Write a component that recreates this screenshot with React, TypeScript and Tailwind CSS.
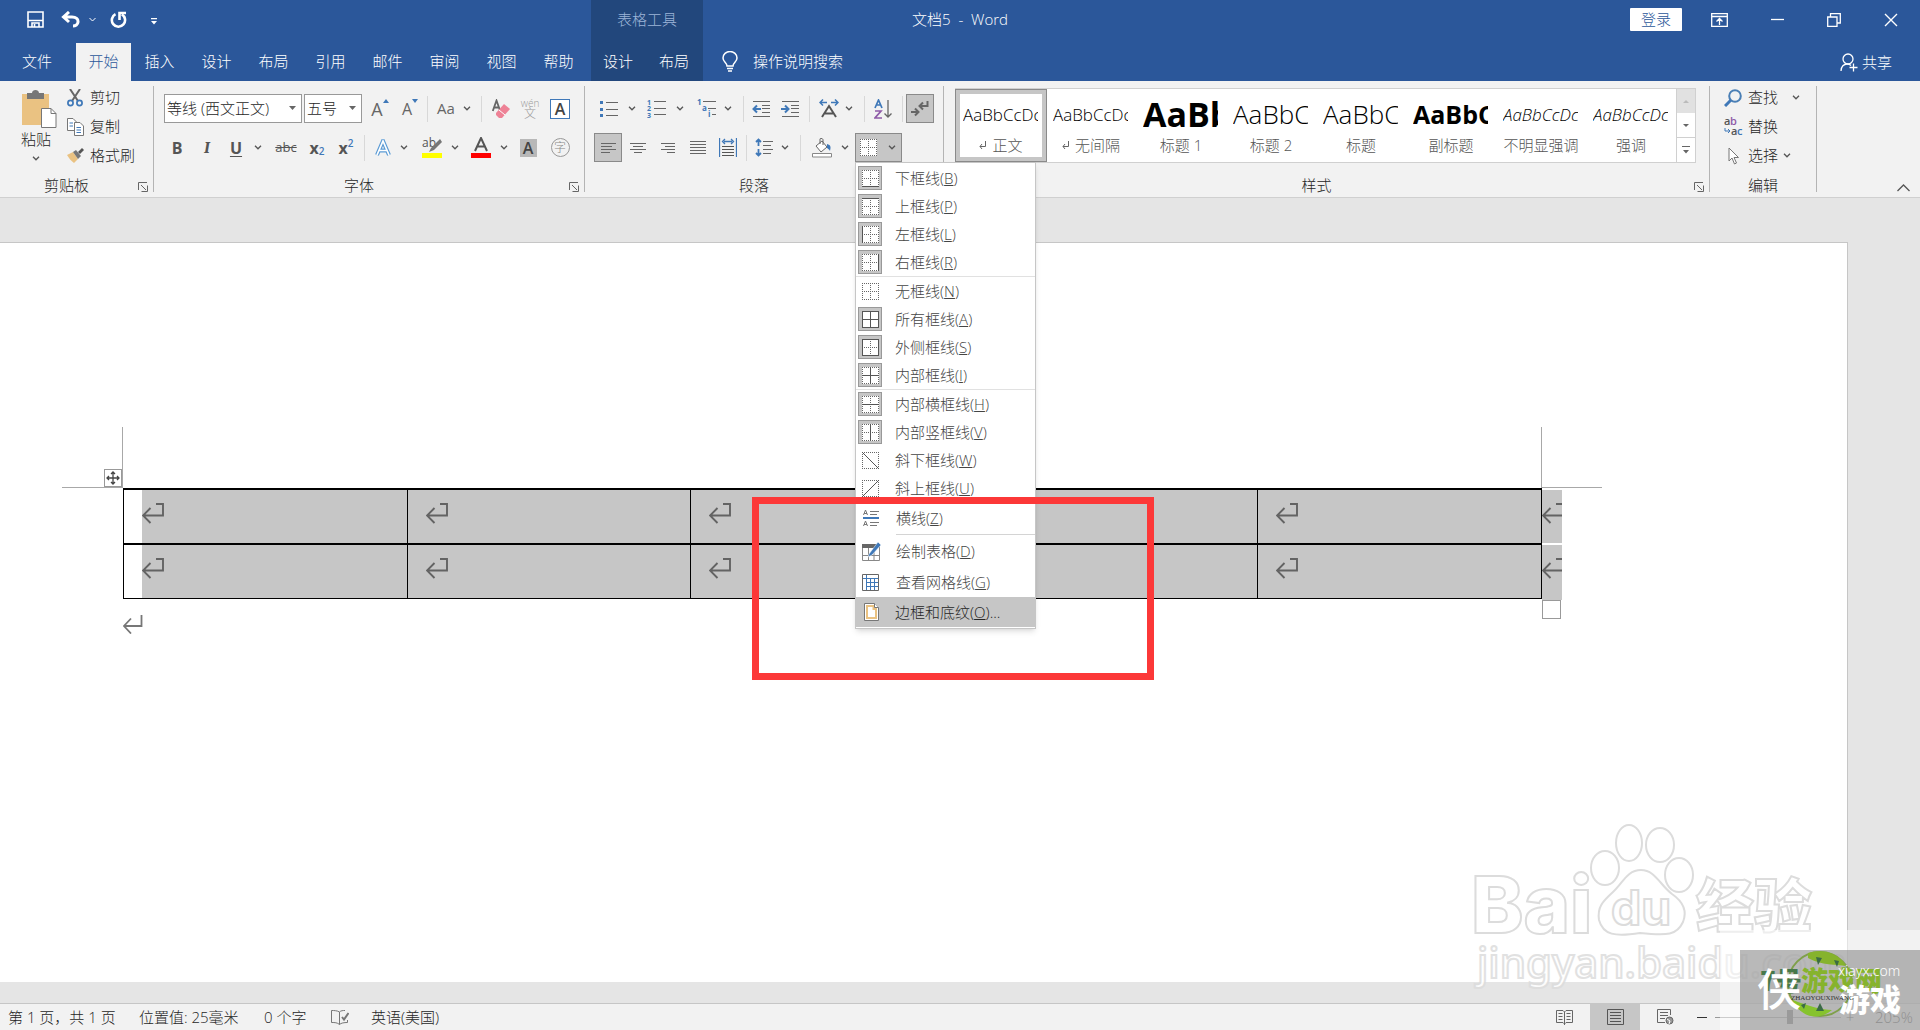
import type { ReactNode } from 'react';
import clsx from 'clsx';

const tabs = ['插入', '设计', '布局', '引用', '邮件', '审阅', '视图', '帮助'];

const styleItems = [
  { name: '正文', mark: true, preview: 'AaBbCcDc', cls: 'text-[17px]', active: true },
  { name: '无间隔', mark: true, preview: 'AaBbCcDc', cls: 'text-[17px]' },
  { name: '标题 1', preview: 'AaBb', cls: 'text-[34px] font-bold' },
  { name: '标题 2', preview: 'AaBbC', cls: 'text-[26px]' },
  { name: '标题', preview: 'AaBbC', cls: 'text-[26px]' },
  { name: '副标题', preview: 'AaBbC', cls: 'text-[25px] font-bold' },
  { name: '不明显强调', preview: 'AaBbCcDc', cls: 'text-[17px] italic text-[#555]' },
  { name: '强调', preview: 'AaBbCcDc', cls: 'text-[17px] italic' },
];

type Border = { label: string; hot: string; lines: string; on?: boolean };

// t/b/l/r = outer edges, h/v = inner lines, d/u = diagonals
const borderGroups: Border[][] = [
  [
    { label: '下框线', hot: 'B', lines: 'b', on: true },
    { label: '上框线', hot: 'P', lines: 't', on: true },
    { label: '左框线', hot: 'L', lines: 'l', on: true },
    { label: '右框线', hot: 'R', lines: 'r', on: true },
  ],
  [
    { label: '无框线', hot: 'N', lines: '' },
    { label: '所有框线', hot: 'A', lines: 'tblrhv', on: true },
    { label: '外侧框线', hot: 'S', lines: 'tblr', on: true },
    { label: '内部框线', hot: 'I', lines: 'hv', on: true },
  ],
  [
    { label: '内部横框线', hot: 'H', lines: 'h', on: true },
    { label: '内部竖框线', hot: 'V', lines: 'v', on: true },
    { label: '斜下框线', hot: 'W', lines: 'd' },
    { label: '斜上框线', hot: 'U', lines: 'u' },
  ],
];

const linePaths: Record<string, string> = {
  t: 'M0 .5H17', b: 'M0 16.5H17', l: 'M.5 0V17', r: 'M16.5 0V17',
  h: 'M0 8.5H17', v: 'M8.5 0V17', d: 'M0 0L17 17', u: 'M0 17L17 0',
};

function BorderIcon({ lines }: { lines: string }) {
  const diagonal = lines === 'd' || lines === 'u';
  return (
    <svg width="17" height="17" viewBox="0 0 17 17" fill="none">
      {!diagonal && <rect width="17" height="17" fill="#fff" />}
      <path d="M0 .5H17M0 16.5H17M.5 0V17M16.5 0V17" stroke="#666" strokeDasharray="1 1" />
      {!diagonal && <path d="M2 8.5H15M8.5 2V15" stroke="#666" strokeDasharray="1 1" />}
      {lines.split('').map(l => <path key={l} d={linePaths[l]} stroke="#555" />)}
    </svg>
  );
}

function Chevron({ className }: { className?: string }) {
  return (
    <svg className={clsx('shrink-0', className)} width="8" height="5" viewBox="0 0 8 5" fill="none">
      <path d="M1 .8L4 3.8L7 .8" stroke="#555" strokeWidth="1.3" />
    </svg>
  );
}

function Btn({ label, className, children }: { label: string; className?: string; children: ReactNode }) {
  return (
    <button type="button" aria-label={label} className={clsx('flex h-[29px] shrink-0 items-center justify-center', className)}>
      {children}
    </button>
  );
}

function Sep({ className = 'w-1.5' }: { className?: string }) {
  return <div className={clsx('flex shrink-0 justify-center', className)}><div className="h-[26px] w-px bg-[#d8d8d8]" /></div>;
}

function Group({ label, launcher = true, className, children }: { label: string; launcher?: boolean; className?: string; children: ReactNode }) {
  return (
    <>
      <section aria-label={label} className={clsx('flex shrink-0 flex-col', className)}>
        <div className="h-[94px]">{children}</div>
        <div className="flex h-5 items-center">
          <span className="flex-1 text-center text-[15px] leading-5">{label}</span>
          {launcher && (
            <button type="button" aria-label={label + '设置'} className="flex w-5 justify-center pt-1">
              <svg width="10" height="10" viewBox="0 0 10 10" fill="none" stroke="#666">
                <path d="M.5 8V.5H9M3 3L8 8M9.5 3.5V9.5H3.5" />
              </svg>
            </button>
          )}
        </div>
      </section>
      <div className="mt-[5px] h-[106px] w-px shrink-0 bg-[#b4b4b4]" />
    </>
  );
}

const Lines = ({ d }: { d: string }) => (
  <svg width="18" height="18" viewBox="0 0 18 18" stroke="#666" fill="none"><path d={d} /></svg>
);

function ReturnMark() {
  return (
    <svg className="shrink-0" width="22" height="21" viewBox="0 0 22 21" fill="none" stroke="#636363" strokeWidth="1.9">
      <path d="M14 1H21V12.5H1M8.5 5L1 12.5L8.5 20" />
    </svg>
  );
}

const SmallMark = () => (
  <svg width="8" height="8" viewBox="0 0 8 8" fill="none" stroke="#666"><path d="M6.5 0V5.5H1M3 3L1 5.5L3 8" /></svg>
);

function TitleBar() {
  return (
    <div className="grid h-[43px] grid-cols-[1fr_auto_1fr] text-[15px] text-white">
      <div className="flex">
        <div className="flex w-[591px] shrink-0 items-center pb-1 pl-[27px]">
          <button type="button" aria-label="保存">
            <svg width="17" height="17" viewBox="0 0 17 17" fill="none" stroke="#fff" strokeWidth="1.6"><path d="M1 1H16V16H1ZM1.5 9.5H15.5M5 16V12H12V16M7.5 13V16" /></svg>
          </button>
          <button type="button" aria-label="撤消" className="ml-[17px] flex items-center gap-[9px]">
            <svg width="19" height="17" viewBox="0 0 19 17" fill="none" stroke="#fff" strokeWidth="3"><path d="M8 1L2.5 6L8 11M2.5 6H11C15 6 17.3 8 17 11C16.8 13.5 14.5 15 12 15" /></svg>
            <svg width="7" height="5" viewBox="0 0 7 5" fill="none" stroke="#fff"><path d="M.5 1L3.5 4L6.5 1" /></svg>
          </button>
          <button type="button" aria-label="重复" className="ml-[14px]">
            <svg width="17" height="18" viewBox="0 0 17 18" fill="none" stroke="#fff" strokeWidth="2.6"><path d="M5.5 3.2A6.6 6.6 0 1 0 11.8 3.4" /><path d="M9.5 9V2H16" /></svg>
          </button>
          <button type="button" aria-label="自定义快速访问工具栏" className="ml-[24px] pt-1">
            <svg width="6" height="7" viewBox="0 0 6 7" fill="#fff"><path d="M0 0H6V1.2H0ZM0 3H6L3 6.5Z" /></svg>
          </button>
        </div>
        <div className="flex w-[112px] shrink-0 items-center justify-center bg-[#22477c] pb-1 text-[#9db5d8]">表格工具</div>
      </div>
      <h1 className="flex items-center pb-1 whitespace-pre">文档5  -  Word</h1>
      <div className="flex items-center justify-end pr-[22px] pb-1">
        <button type="button" className="mr-[29px] h-[23px] w-[52px] rounded-[1px] bg-white leading-[23px] text-[#2b579a]">登录</button>
        <button type="button" aria-label="功能区显示选项" className="mr-[43px]">
          <svg width="17" height="14" viewBox="0 0 17 14" fill="none" stroke="#fff" strokeWidth="1.3"><path d="M.7 .7H16.3V13.3H.7ZM.7 3.5H16.3M8.5 12V6M5.5 8.5L8.5 5.5L11.5 8.5" /></svg>
        </button>
        <button type="button" aria-label="最小化" className="mr-[43px]">
          <svg width="13" height="13" viewBox="0 0 13 13" stroke="#fff"><path d="M0 6.5H13" strokeWidth="1.3" /></svg>
        </button>
        <button type="button" aria-label="向下还原" className="mr-[43px]">
          <svg width="14" height="14" viewBox="0 0 14 14" fill="none" stroke="#fff" strokeWidth="1.3"><path d="M.7 4H10V13.3H.7ZM3.5 4V.7H13.3V10H10" /></svg>
        </button>
        <button type="button" aria-label="关闭">
          <svg width="14" height="14" viewBox="0 0 14 14" stroke="#fff" strokeWidth="1.4"><path d="M1 1L13 13M13 1L1 13" /></svg>
        </button>
      </div>
    </div>
  );
}

function TabRow() {
  return (
    <nav className="flex h-[38px] text-[15px] text-white">
      <div className="flex w-[591px] shrink-0">
        <button type="button" className="w-[76px] pr-0.5 pb-0.5">文件</button>
        <button type="button" className="w-[55px] bg-[#f2f2f2] pb-0.5 text-[#2b579a]">开始</button>
        {tabs.map(t => <button type="button" key={t} className="w-[57px] pb-0.5">{t}</button>)}
      </div>
      <div className="flex w-[112px] shrink-0 bg-[#22477c] pb-0.5">
        <button type="button" className="w-[54px]">设计</button>
        <button type="button" className="w-[58px]">布局</button>
      </div>
      <label className="flex items-center pb-0.5 pl-[19px]">
        <svg width="16" height="21" viewBox="0 0 16 21" fill="none" stroke="#fff" strokeWidth="1.5">
          <path d="M5 15C5 12 1 11 1 7A7 6.5 0 0 1 15 7C15 11 11 12 11 15ZM5 17.5H11M6 20H10" />
        </svg>
        <input type="text" aria-label="操作说明搜索" placeholder="操作说明搜索" className="ml-[15px] w-[180px] bg-transparent outline-none placeholder:text-white" />
      </label>
      <button type="button" className="mr-[28px] ml-auto flex items-center gap-1">
        <svg width="18" height="19" viewBox="0 0 18 19" fill="none" stroke="#fff" strokeWidth="1.3">
          <circle cx="8" cy="6" r="5" /><path d="M1 18C1 13.5 4 11 7 11C9 11 10 11.5 11 12.5M13.5 10.5V18.5M9.5 14.5H17.5" />
        </svg>
        共享
      </button>
    </nav>
  );
}

function Clipboard() {
  return (
    <Group label="剪贴板" className="w-[153px]">
      <div className="flex pt-2">
        <button type="button" className="ml-[15px] flex w-[42px] flex-col items-center">
          <svg width="42" height="39" viewBox="-6 0 42 39">
            <path d="M1 5H28V36H1Z" fill="#eac282" />
            <path d="M6 4H11C11 0 18 0 18 4H23V10H6Z" fill="#777" />
            <path d="M20.5 19.5H30L35 24.5V38.5H20.5Z" fill="#fff" stroke="#777" /><path d="M30 19.5V24.5H35" fill="none" stroke="#777" />
          </svg>
          <span className="text-[15px] leading-[22px]">粘贴</span>
          <Chevron className="mt-1.5" />
        </button>
        <div className="ml-[10px] flex flex-col text-[15px]">
          <button type="button" className="flex h-[17px] items-center gap-[7px]">
            <svg width="16" height="18" viewBox="0 0 16 18" fill="none" strokeWidth="1.7"><path d="M3 0L11 12M13 0L5 12" stroke="#666" strokeWidth="2" /><circle cx="3.5" cy="14" r="2.6" stroke="#3f78b8" /><circle cx="12.5" cy="14" r="2.6" stroke="#3f78b8" /></svg>
            剪切
          </button>
          <button type="button" className="mt-3 flex h-[17px] items-center gap-[6px]">
            <svg width="17" height="18" viewBox="0 0 17 18" fill="#fff" stroke="#777"><path d="M.5 .5H6L9.5 4V12.5H.5Z" /><path d="M7.500 4.500H13L16.500 8V17.500H7.500Z" /><path d="M2.500 5H6M2.500 8H6M9.500 9.500H14M9.500 12H14M9.500 14.500H14" stroke="#3f78b8" /></svg>
            复制
          </button>
          <button type="button" className="mt-3 flex h-[17px] items-center gap-[6px]">
            <svg width="17" height="16" viewBox="0 0 17 16"><path d="M0 7L6 4L11 11L7 15C4 13 2 10 0 7Z" fill="#eac282" /><path d="M6 4L9 2L14 8L11 11Z" fill="#777" /><path d="M11 4L15 0L17 2L13 6Z" fill="#555" /></svg>
            格式刷
          </button>
        </div>
      </div>
    </Group>
  );
}

function FontGroup() {
  return (
    <Group label="字体" className="w-[430px]">
      <div className="flex items-center pt-[13px] pl-[10px]">
        <div className="relative">
          <select aria-label="字体名称" className="h-[29px] w-[138px] appearance-none border border-[#999] bg-white pl-0.5 text-[15px] outline-none">
            <option>等线 (西文正文)</option>
          </select>
          <svg className="pointer-events-none absolute top-3 right-1.5" width="7" height="4" viewBox="0 0 7 4" fill="#666"><path d="M0 0H7L3.500 4Z" /></svg>
        </div>
        <div className="relative ml-0.5">
          <select aria-label="字号" className="h-[29px] w-[58px] appearance-none border border-[#999] bg-white pl-0.5 text-[15px] outline-none">
            <option>五号</option>
          </select>
          <svg className="pointer-events-none absolute top-3 right-1.5" width="7" height="4" viewBox="0 0 7 4" fill="#666"><path d="M0 0H7L3.500 4Z" /></svg>
        </div>
        <Btn label="增大字号" className="ml-0.5 w-8 text-lg font-normal text-[#666]">
          A<svg className="mb-4" width="6" height="4" viewBox="0 0 6 4" fill="#3f78b8"><path d="M0 4H6L3 0Z" /></svg>
        </Btn>
        <Btn label="减小字号" className="w-7 text-base font-normal text-[#666]">
          A<svg className="mb-4" width="6" height="4" viewBox="0 0 6 4" fill="#3f78b8"><path d="M0 0H6L3 4Z" /></svg>
        </Btn>
        <Sep />
        <Btn label="更改大小写" className="w-12 gap-2 text-[15px] font-normal text-[#666]">Aa<Chevron /></Btn>
        <Sep />
        <Btn label="清除所有格式" className="w-[34px]">
          <svg width="18" height="20" viewBox="0 0 18 20"><path d="M.8 12L4.500 1.500L8.200 12M2 8.500H7" fill="none" stroke="#666" strokeWidth="1.8" /><path d="M4 14L12 5L18 10L10 19H7L4 16Z" fill="#ee8296" /><path d="M7 11L13 16" stroke="#fff" /></svg>
        </Btn>
        <Btn label="拼音指南" className="w-6 flex-col text-[#999]">
          <span className="text-[10px] leading-[14px]">wén</span><span className="-mt-1 text-xs leading-4">文</span>
        </Btn>
        <Btn label="字符边框" className="w-9">
          <span className="flex h-5 w-5 items-center justify-center border border-[#3f78b8] bg-white text-base leading-5 font-semibold text-[#444]">A</span>
        </Btn>
      </div>
      <div className="flex items-center pt-[10px] pl-[9px] text-[#555]">
        <Btn label="加粗" className="w-7 text-base font-bold">B</Btn>
        <Btn label="倾斜" className="w-8 font-serif text-[17px] font-bold italic">I</Btn>
        <Btn label="下划线" className="w-[46px] gap-3 text-base font-bold"><span className="underline underline-offset-2">U</span><Chevron /></Btn>
        <Btn label="删除线" className="w-[34px] text-[13px] font-normal line-through">abc</Btn>
        <Btn label="下标" className="w-7 text-base font-bold">x<span className="pt-2 text-[10px] font-semibold text-[#3f78b8]">2</span></Btn>
        <Btn label="上标" className="w-[30px] text-base font-bold">x<span className="pb-2 text-[10px] font-semibold text-[#3f78b8]">2</span></Btn>
        <Sep />
        <Btn label="文本效果" className="w-12 gap-[9px]">
          <svg width="16" height="18" viewBox="0 0 16 18" fill="none"><path d="M2 16L8 2L14 16M4 11.500H12" stroke="#5b9bd5" strokeWidth="4" /><path d="M2 16L8 2L14 16M4 11.500H12" stroke="#fff" strokeWidth="1.700" /></svg>
          <Chevron />
        </Btn>
        <Btn label="突出显示" className="w-[50px] gap-[9px]">
          <svg width="20" height="21" viewBox="0 0 20 21"><text x="0" y="10" fontSize="12" fontWeight="400" fill="#555">ab</text><path d="M18 2L9 11L7 15L12 13L20 5Z" fill="#777" /><path d="M0 16H20V21H0Z" fill="#ff0" /></svg>
          <Chevron />
        </Btn>
        <Btn label="字体颜色" className="w-12 gap-[9px]">
          <svg width="20" height="21" viewBox="0 0 20 21"><path d="M4 14L10 1L16 14M6 9.500H14" fill="none" stroke="#555" strokeWidth="2" /><path d="M0 16H20V21H0Z" fill="#f00" /></svg>
          <Chevron />
        </Btn>
        <Btn label="字符底纹" className="w-[30px]"><span className="h-[18px] w-[17px] bg-[#b8b8b8] text-base leading-[18px] font-semibold text-[#444]">A</span></Btn>
        <Btn label="带圈字符" className="w-[34px]"><span className="flex h-[19px] w-[19px] items-center justify-center rounded-full border border-[#999] text-xs leading-4 text-[#888]">字</span></Btn>
      </div>
    </Group>
  );
}

function BordersMenu() {
  return (
    <div role="menu" className="absolute top-full left-0 z-20 w-[181px] border border-[#c6c6c6] bg-white pt-px text-[15px] text-[#444] shadow-md">
      {borderGroups.map((g, i) => (
        <div key={i} className={clsx('border-[#e1e1e1]', i < 2 && 'border-b')}>
          {g.map(b => (
            <button type="button" role="menuitem" key={b.hot} className="flex h-7 w-full items-center pl-[2px]">
              <span className={clsx('mr-[13px] flex h-6 w-6 items-center justify-center border', b.on ? 'border-[#999] bg-[#c6c6c6]' : 'border-transparent')}>
                <BorderIcon lines={b.lines} />
              </span>
              <span>{b.label}(<u>{b.hot}</u>)</span>
            </button>
          ))}
        </div>
      ))}
      <button type="button" role="menuitem" className="flex h-8 w-full items-center pl-[7px]">
        <svg className="mr-[17px]" width="16" height="17" viewBox="0 0 16 17" fill="none" stroke="#777">
          <path d="M.5 5L2.500 0L4.500 5M1 3.500H4M.5 16L2.500 11L4.500 16M1 14.500H4M7 1.500H16M7 4.500H14M7 12.500H16M7 15.500H14" /><path d="M0 8H16" stroke="#3f78b8" strokeWidth="2" />
        </svg>
        <span>横线(<u>Z</u>)</span>
      </button>
      <div className="ml-10 h-px bg-[#d4d4d4]" />
      <button type="button" role="menuitem" className="flex h-[33px] w-full items-center pl-[6px]">
        <svg className="mr-[15px]" width="19" height="20" viewBox="0 0 19 20" fill="none">
          <path d="M.5 2.500H17.500V18.500H.5ZM.5 13.500H17M6.500 6V18M12 6V18" stroke="#888" /><path d="M0 2H15V6H0Z" fill="#666" /><path d="M7 12L16 0L19 3L10 13L6 15Z" fill="#3f78b8" stroke="#fff" strokeWidth=".5" />
        </svg>
        <span>绘制表格(<u>D</u>)</span>
      </button>
      <button type="button" role="menuitem" className="flex h-[29px] w-full items-center pl-[6px]">
        <svg className="mr-[17px]" width="17" height="17" viewBox="0 0 17 17" fill="none">
          <path d="M1 4.500H16M4 8.500H16M4 12.500H16M4.500 1V16M8.500 4V16M12.500 4V16" stroke="#3f78b8" /><path d="M.5 .5H16.500V16.500H.5Z" stroke="#666" />
        </svg>
        <span>查看网格线(<u>G</u>)</span>
      </button>
      <button type="button" role="menuitem" className="mb-px flex h-[30px] w-full items-center bg-[#c6c6c6] pl-[8px] text-[#262626]">
        <svg className="mr-[16px]" width="15" height="18" viewBox="0 0 15 18" fill="#fff">
          <path d="M.5 .5H10.500L14.500 4.500V17.500H.5Z" stroke="#777" /><path d="M3 3H9.500V6H12V15H3Z" stroke="#eac282" strokeWidth="2" /><path d="M10.500 .5V4.500H14.500" stroke="#777" />
        </svg>
        <span>边框和底纹(<u>O</u>)...</span>
      </button>
    </div>
  );
}

function ParagraphGroup() {
  return (
    <Group label="段落" className="w-[358px]">
      <div className="flex items-center pt-[13px] pl-[9px]">
        <Btn label="项目符号" className="w-[46px] gap-[9px]">
          <svg width="20" height="18" viewBox="0 0 20 18"><path d="M7 2.500H19M7 9.500H19M7 15.500H19" stroke="#666" /><path d="M1 1H4V4H1ZM1 8H4V11H1ZM1 14H4V17H1Z" fill="#3f78b8" /></svg>
          <Chevron />
        </Btn>
        <Btn label="编号" className="w-[50px] gap-[9px]">
          <svg width="20" height="19" viewBox="0 0 20 19"><path d="M7 2.500H19M7 9.500H19M7 15.500H19" stroke="#666" /><g fontSize="7" fontWeight="700" fill="#3f78b8"><text x="0" y="6">1</text><text x="0" y="12">2</text><text x="0" y="19">3</text></g></svg>
          <Chevron />
        </Btn>
        <Btn label="多级列表" className="w-12 gap-[7px]">
          <svg width="20" height="19" viewBox="0 0 20 19"><path d="M6 2.500H19M11 9.500H19M15 15.500H19" stroke="#666" /><g fontSize="8" fontWeight="700" fill="#3f78b8"><text x="0" y="6">1</text><text x="5" y="12">a</text><text x="11" y="18">i</text></g></svg>
          <Chevron />
        </Btn>
        <Sep className="w-2.5" />
        <Btn label="减少缩进量" className="w-[26px]">
          <svg width="18" height="18" viewBox="0 0 18 18" fill="none"><path d="M1 1.500H18M10 5.500H18M10 8.500H18M10 12.500H18M1 16.500H18" stroke="#666" /><path d="M9 9H2M5 5.500L1.500 9L5 12.500" stroke="#3f78b8" strokeWidth="2" /></svg>
        </Btn>
        <Btn label="增加缩进量" className="w-8">
          <svg width="18" height="18" viewBox="0 0 18 18" fill="none"><path d="M1 1.500H18M10 5.500H18M10 8.500H18M10 12.500H18M1 16.500H18" stroke="#666" /><path d="M0 9H7M4 5.500L7.500 9L4 12.500" stroke="#3f78b8" strokeWidth="2" /></svg>
        </Btn>
        <Sep />
        <Btn label="中文版式" className="w-12 gap-[6px]">
          <svg width="20" height="19" viewBox="0 0 20 19" fill="none"><path d="M3 18L10 7L17 18M6 14.500H14" stroke="#555" strokeWidth="2" /><path d="M1 3.500H8M4 .5L1 3.500L4 6.500M12 3.500H19M16 .5L19 3.500L16 6.500" stroke="#3f78b8" strokeWidth="1.500" /></svg>
          <Chevron />
        </Btn>
        <Sep className="w-2" />
        <Btn label="排序" className="w-[30px]">
          <svg width="18" height="20" viewBox="0 0 18 20" fill="none"><path d="M1 9L4.500 1L8 9M2 6H7" stroke="#3f78b8" strokeWidth="1.700" /><path d="M1 12H7L1 19H8" stroke="#8e5ba8" strokeWidth="1.700" /><path d="M14 1V18M10.500 14.500L14 18L17.500 14.500" stroke="#666" strokeWidth="1.300" /></svg>
        </Btn>
        <Sep className="w-2" />
        <Btn label="显示编辑标记" className="w-7 border border-[#8a8a8a] bg-[#c6c6c6]">
          <svg width="18" height="16" viewBox="0 0 18 16" fill="none" stroke="#666" strokeWidth="2"><path d="M16.500 0V5H9M12 1.500L8.500 5L12 8.500M0 11H7M4 7.500L7.500 11L4 14.500" /></svg>
        </Btn>
      </div>
      <div className="flex items-center pt-[10px] pl-[9px]">
        <Btn label="左对齐" className="w-7 border border-[#8a8a8a] bg-[#c6c6c6]"><Lines d="M2 4.500H17M2 7.500H13M2 10.500H17M2 13.500H11" /></Btn>
        <Btn label="居中" className="w-8"><Lines d="M1 4.500H17M4 7.500H14M1 10.500H17M5 13.500H13" /></Btn>
        <Btn label="右对齐" className="w-7"><Lines d="M2 4.500H16M6 7.500H16M2 10.500H16M8 13.500H16" /></Btn>
        <Btn label="两端对齐" className="w-8"><Lines d="M1 2.500H17M1 5.500H17M1 8.500H17M1 11.500H17M1 14.500H17" /></Btn>
        <Btn label="分散对齐" className="w-7">
          <svg width="18" height="19" viewBox="0 0 18 19" fill="none"><path d="M.5 0V19M17.500 0V19M5 3.500H13M6 1L3.500 3.500L6 6M12 1L14.500 3.500L12 6" stroke="#3f78b8" strokeWidth="1.300" /><path d="M3 8.500H15M3 11.500H15M3 14.500H15M3 17.500H15" stroke="#555" /></svg>
        </Btn>
        <Sep className="w-2" />
        <Btn label="行和段落间距" className="w-11 gap-[8px]">
          <svg width="18" height="19" viewBox="0 0 18 19" fill="none"><path d="M8 3.500H18M8 7.500H16M8 11.500H18M8 15.500H16" stroke="#666" /><path d="M3.500 1.500V8M1 4L3.500 1.500L6 4M3.500 11V17.500M1 15L3.500 17.500L6 15" stroke="#3f78b8" strokeWidth="1.800" /></svg>
          <Chevron />
        </Btn>
        <Sep className="w-3" />
        <Btn label="底纹" className="w-[49px] gap-[8px]">
          <svg width="21" height="20" viewBox="0 0 21 20" fill="none"><path d="M4 8L10 3L15 9L9 14Z" fill="#fff" stroke="#666" /><path d="M8 6V1C8 0 11 0 11 2V7" stroke="#666" /><path d="M15 6C19 7 19 9 18 13C17 11 16 11 15 10Z" fill="#3f78b8" /><path d="M.5 15.500H19.500V19H.5Z" fill="#fff" stroke="#888" /></svg>
          <Chevron />
        </Btn>
        <div className="relative">
          <Btn label="边框" className="w-[47px] gap-[11px] border border-[#8a8a8a] bg-[#c6c6c6] pr-0.5"><BorderIcon lines="" /><Chevron /></Btn>
          <BordersMenu />
        </div>
      </div>
    </Group>
  );
}

function StylesGroup() {
  return (
    <Group label="样式" className="w-[765px]">
      <div className="mt-[7px] ml-[11px] flex h-[75px] w-[741px] border border-[#d0d0d0] bg-white">
        {styleItems.map(s => (
          <button type="button" key={s.name} className={clsx('flex w-[90px] shrink-0 flex-col', s.active ? 'my-px border-4 border-[#c6c6c6] px-[3px] outline-1 outline-[#8a8a8a]' : 'px-[7px] py-[5px]')}>
            <span className={clsx('flex h-[41px] w-[75px] items-center overflow-hidden whitespace-nowrap text-black', s.cls)}>{s.preview}</span>
            <span className="flex w-full items-center justify-center gap-[5px] text-[15px] leading-5 whitespace-nowrap text-[#555]">
              {s.mark && <SmallMark />}{s.name}
            </span>
          </button>
        ))}
        <div className="flex w-[19px] flex-col border-l border-[#d0d0d0]">
          <button type="button" aria-label="上一行" className="flex flex-1 items-center justify-center bg-[#e1e1e1]"><svg width="6" height="3" viewBox="0 0 6 3" fill="#bbb"><path d="M0 3H6L3 0Z" /></svg></button>
          <button type="button" aria-label="下一行" className="flex flex-1 items-center justify-center border-b border-[#d0d0d0]"><svg width="6" height="3" viewBox="0 0 6 3" fill="#666"><path d="M0 0H6L3 3Z" /></svg></button>
          <button type="button" aria-label="其他" className="flex flex-1 items-center justify-center"><svg width="8" height="8" viewBox="0 0 8 8" fill="#666"><path d="M0 0H8V1H0ZM1 4H7L4 7.500Z" /></svg></button>
        </div>
      </div>
    </Group>
  );
}

function EditGroup() {
  return (
    <Group label="编辑" launcher={false} className="w-[106px]">
      <div className="flex flex-col items-start pt-2 pl-[14px] text-[15px]">
        <button type="button" className="flex h-[17px] items-center">
          <svg className="mr-[6px]" width="18" height="18" viewBox="0 0 18 18" fill="none" stroke="#3f78b8"><circle cx="11" cy="7" r="5.800" stroke="#4a7fb5" strokeWidth="2" /><path d="M7 11L1 17" strokeWidth="3" /></svg>
          查找<Chevron className="ml-[14px]" />
        </button>
        <button type="button" className="mt-3 flex h-[17px] items-center">
          <svg className="mr-[5px]" width="19" height="19" viewBox="0 0 19 19"><g fontSize="11" fontWeight="600"><text x="0" y="8" fill="#555">a</text><text x="6" y="8" fill="#8e5ba8">b</text><text x="7" y="18" fill="#555">a</text><text x="13" y="18" fill="#3f78b8">c</text></g><path d="M1 11V14H6M4 12L6 14L4 16" fill="none" stroke="#3f78b8" /></svg>
          替换
        </button>
        <button type="button" className="mt-3 flex h-[17px] items-center">
          <svg className="mr-[9px] ml-1" width="11" height="18" viewBox="0 0 11 18" fill="#fff" stroke="#777"><path d="M1 1V14L4 11L6.500 17L8.500 16L6 10.500H10.500Z" /></svg>
          选择<Chevron className="ml-[5px]" />
        </button>
      </div>
    </Group>
  );
}

function DocumentPage() {
  return (
    <main className="relative flex-1 bg-[#e5e5e5] pt-[44px] pr-[72px] pb-[21px]">
      <div className="h-[740px] border-t border-r border-[#c6c6c6] bg-white pt-[245px] pr-[305px] pl-[123px]">
        <div className="relative">
          <div className="absolute -top-[61px] -left-[61px] h-[61px] w-[61px] border-r border-b border-[#a8a8a8]" />
          <div className="absolute -top-[61px] left-full -ml-px h-[61px] w-[61px] border-b border-l border-[#a8a8a8]" />
          <div className="absolute -top-[19px] -left-[19px] flex h-[18px] w-[18px] items-center justify-center border border-[#999] bg-white">
            <svg width="14" height="14" viewBox="0 0 14 14" fill="none" stroke="#444" strokeWidth="1.300"><path d="M7 1V13M1 7H13M5 3L7 1L9 3M5 11L7 13L9 11M3 5L1 7L3 9M11 5L13 7L11 9" /></svg>
          </div>
          <table className="w-full table-fixed border-separate border-spacing-0 border-r border-b border-black">
            <tbody>
              {[0, 1].map(r => (
                <tr key={r}>
                  {[0, 1, 2, 3, 4].map(c => (
                    <td key={c} className={clsx('border-t-2 border-l border-black p-0', c === 0 && 'pl-[18px]')}>
                      <div className={clsx('h-[53px] bg-[#c6c6c6] pt-[13px]', c > 0 && 'pl-[18px]')}><ReturnMark /></div>
                    </td>
                  ))}
                </tr>
              ))}
            </tbody>
          </table>
          <div className="absolute top-[2px] left-full flex w-5 flex-col gap-[2px]">
            <div className="h-[53px] overflow-hidden bg-[#c6c6c6] pt-[13px]"><ReturnMark /></div>
            <div className="h-[55px] overflow-hidden bg-[#c6c6c6] pt-[13px]"><ReturnMark /></div>
            <div className="-mt-0.5 h-[19px] w-[19px] border border-[#999] bg-white" />
          </div>
          <svg className="mt-4" width="20" height="19" viewBox="0 0 20 19" fill="none" stroke="#777" strokeWidth="1.800"><path d="M18.500 0V11H1M8 3.500L1 11L8 18.500" /></svg>
        </div>
      </div>
    </main>
  );
}

function StatusBar() {
  return (
    <footer className="flex h-[27px] items-center border-t border-[#c6c6c6] bg-[#f2f2f2] pl-2 text-[15px] text-[#262626]">
      <span className="w-[131px]">第 1 页，共 1 页</span>
      <span className="w-[125px]">位置值: 25毫米</span>
      <span className="w-[67px]">0 个字</span>
      <svg className="mr-[22px]" width="18" height="15" viewBox="0 0 18 15" fill="none" stroke="#777"><path d="M8.500 2V14.500M8.500 2C6 .5 3 .5 .5 .5V12.500C4 12.500 6 12.500 8.500 14.500C10 13 13 12.500 16.500 12.500V10M8.500 2C10 .5 12 .5 14 .5" /><path d="M11 7L13 9.500L17.500 3" strokeWidth="2" /></svg>
      <span>英语(美国)</span>
      <div className="ml-auto flex h-full items-center">
        <button type="button" aria-label="阅读视图" className="mr-[17px]">
          <svg width="17" height="15" viewBox="0 0 17 15" fill="none" stroke="#666"><path d="M8.500 2V15M.5 .5H7L8.500 2L10 .5H16.500V12.500H10L8.500 14L7 12.500H.5ZM2.500 3.500H6.500M2.500 6.500H6.500M2.500 9.500H6.500M10.500 3.500H14.500M10.500 6.500H14.500M10.500 9.500H14.500" /></svg>
        </button>
        <button type="button" aria-label="页面视图" className="flex h-full w-[50px] items-center justify-center bg-[#c6c6c6]">
          <svg width="17" height="16" viewBox="0 0 17 16" fill="none" stroke="#555"><path d="M.5 .5H16.500V15.500H.5ZM3 3.500H14M3 6.500H14M3 9.500H14M3 12.500H14" /></svg>
        </button>
        <button type="button" aria-label="Web 版式视图" className="mr-[23px] ml-[17px]">
          <svg width="17" height="16" viewBox="0 0 17 16" fill="none" stroke="#666"><path d="M13.500 6V.5H.5V13.500H8M3 3.500H11M3 6.500H11M3 9.500H8" /><circle cx="12.500" cy="11.500" r="3.500" fill="#999" /><path d="M10 10L13 12L12 15" stroke="#fff" /></svg>
        </button>
        <button type="button" aria-label="缩小" className="mr-2 h-px w-[10px] bg-[#333]" />
        <input type="range" aria-label="显示比例" min={10} max={500} defaultValue={305} className="h-4 w-[126px] appearance-none bg-[linear-gradient(#999,#999)] bg-[length:100%_1px] bg-center bg-no-repeat [&::-webkit-slider-thumb]:h-[14px] [&::-webkit-slider-thumb]:w-[6px] [&::-webkit-slider-thumb]:appearance-none [&::-webkit-slider-thumb]:bg-[#666]" />
        <button type="button" aria-label="放大" className="mr-[20px] ml-1 w-[10px] text-center">+</button>
        <span className="w-[45px]">205%</span>
      </div>
    </footer>
  );
}

// site stamps laid over the bottom right corner
function Stamps() {
  return (
    <div className="pointer-events-none absolute right-0 bottom-0 z-30">
      <svg width="460" height="220" viewBox="1460 810 460 220" fill="#fff" stroke="#dcdcdc" strokeWidth="2">
        <g fontFamily="Inter, 'Noto Sans CJK SC', sans-serif">
          <text x="1471" y="933" fontSize="79" fontWeight="800">Bai</text>
          <ellipse cx="1605" cy="868" rx="14" ry="17" />
          <ellipse cx="1629" cy="843" rx="13" ry="18" />
          <ellipse cx="1660" cy="845" rx="14" ry="17" />
          <ellipse cx="1679" cy="875" rx="14" ry="17" />
          <path d="M1641 870C1655 870 1660 885 1672 894C1685 903 1687 912 1683 922C1677 935 1668 936 1640 933C1615 937 1603 935 1599 920C1597 907 1603 901 1613 892C1623 883 1627 870 1641 870Z" />
          <text x="1611" y="925" fontSize="48" fontWeight="700">du</text>
          <text x="1696" y="927" fontSize="58" fontWeight="900">经验</text>
          <text x="1477" y="978" fontSize="42" fontWeight="500" fontFamily="Noto Sans, sans-serif" opacity=".85">jingyan.baidu.com</text>
        </g>
        <g stroke="none">
          <path d="M1720 930H1920V950H1740V1030H1720Z" opacity=".5" />
          <path d="M1740 950H1920V1030H1740Z" fill="#a8a8a8" opacity=".8" />
          <circle cx="1820" cy="984" r="32" fill="none" stroke="#7fa04a" />
          <path d="M1808 953C1822 949 1838 952 1846 966C1836 964 1822 966 1808 958Z" fill="#86b32d" />
          <path d="M1793 1000C1800 1018 1820 1021 1832 1010C1822 1010 1808 1006 1793 1000Z" fill="#86c32d" />
          <path d="M1816 957L1822 958L1818 965ZM1834 960L1839 961L1837 967ZM1801 1005L1806 1003L1804 1009ZM1820 1003L1824 1011H1816Z" fill="#3b6b45" />
          <g fontFamily="'Noto Sans CJK SC', sans-serif" fontWeight="900">
            <text x="1760" y="991" fontSize="26" fill="#47784b">7号</text>
            <text x="1801" y="991" fontSize="27" fill="#86b32d">游戏网</text>
            <text x="1757" y="1006" fontSize="44" fontWeight="500">侠</text>
            <text x="1839" y="1011" fontSize="31">游戏</text>
          </g>
          <text x="1791" y="1000" fontSize="7" fill="#333" fontFamily="Liberation Serif, serif">ZHAOYOUXIWANG</text>
          <text x="1838" y="976" fontSize="14" fontFamily="Noto Sans, sans-serif">xiayx.com</text>
        </g>
      </svg>
    </div>
  );
}

export default function App() {
  return (
    <div className="relative flex min-h-screen flex-col overflow-hidden bg-[#f2f2f2] font-['Open_Sans','Noto_Sans_CJK_SC',sans-serif] font-light text-[#262626]">
      <header className="bg-[#2b579a]">
        <TitleBar />
        <TabRow />
      </header>
      <div className="flex h-[117px] border-b border-[#d0d0d0]">
        <Clipboard />
        <FontGroup />
        <ParagraphGroup />
        <StylesGroup />
        <EditGroup />
        <button type="button" aria-label="折叠功能区" className="mt-auto mr-[10px] mb-[5px] ml-auto">
          <svg width="13" height="8" viewBox="0 0 13 8" fill="none" stroke="#555" strokeWidth="1.300"><path d="M.5 7L6.500 1L12.500 7" /></svg>
        </button>
      </div>
      <DocumentPage />
      <StatusBar />
      <div className="pointer-events-none absolute top-[497px] left-[752px] z-30 h-[183px] w-[402px] border-[7px] border-[#fc3838]" />
      <Stamps />
    </div>
  );
}
